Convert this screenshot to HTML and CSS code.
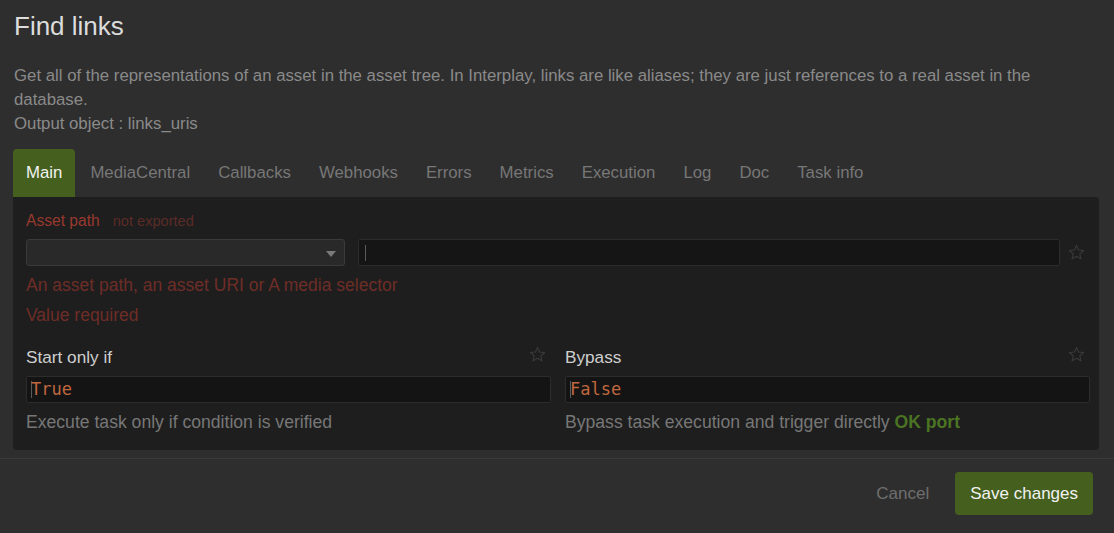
FILE: index.html
```html
<!DOCTYPE html>
<html>
<head>
<meta charset="utf-8">
<link rel="stylesheet" href="styles.css">
</head>
<body>
<div class="modal">
  <div class="body">
    <h1 class="title">Find links</h1>
    <p class="desc">Get all of the representations of an asset in the asset tree. In Interplay, links are like aliases; they are just references to a real asset in the database.<br>Output object : links_uris</p>
    <div class="tabs">
      <span class="tab active">Main</span>
      <span class="tab">MediaCentral</span>
      <span class="tab">Callbacks</span>
      <span class="tab">Webhooks</span>
      <span class="tab">Errors</span>
      <span class="tab">Metrics</span>
      <span class="tab">Execution</span>
      <span class="tab">Log</span>
      <span class="tab">Doc</span>
      <span class="tab">Task info</span>
    </div>
    <div class="panel">
      <div class="label-row">
        <span class="label-err">Asset path</span>
        <span class="not-exported">not exported</span>
      </div>
      <div class="asset-row">
        <div class="select"><span class="caret"></span></div>
        <div class="text-input"><span class="cursor"></span></div>
        <div class="star-slot">
          <svg class="star" viewBox="0 0 16 16" width="17" height="17"><path d="M8 1.3l1.9 4.4 4.8.4-3.6 3.2 1.1 4.7L8 11.5 3.8 14l1.1-4.7L1.3 6.1l4.8-.4z" fill="none" stroke="#3b3b3b" stroke-width="1" stroke-linejoin="round"/></svg>
        </div>
      </div>
      <div class="err-msg first">An asset path, an asset URI or A media selector</div>
      <div class="err-msg second">Value required</div>
      <div class="cols">
        <div class="col">
          <div class="field-head">
            <span class="field-label">Start only if</span>
            <svg class="star" viewBox="0 0 16 16" width="17" height="17"><path d="M8 1.3l1.9 4.4 4.8.4-3.6 3.2 1.1 4.7L8 11.5 3.8 14l1.1-4.7L1.3 6.1l4.8-.4z" fill="none" stroke="#3b3b3b" stroke-width="1" stroke-linejoin="round"/></svg>
          </div>
          <div class="code-input"><span class="cursor"></span>True</div>
          <div class="help">Execute task only if condition is verified</div>
        </div>
        <div class="col">
          <div class="field-head">
            <span class="field-label">Bypass</span>
            <svg class="star" viewBox="0 0 16 16" width="17" height="17"><path d="M8 1.3l1.9 4.4 4.8.4-3.6 3.2 1.1 4.7L8 11.5 3.8 14l1.1-4.7L1.3 6.1l4.8-.4z" fill="none" stroke="#3b3b3b" stroke-width="1" stroke-linejoin="round"/></svg>
          </div>
          <div class="code-input"><span class="cursor"></span>False</div>
          <div class="help">Bypass task execution and trigger directly <b class="ok">OK port</b></div>
        </div>
      </div>
    </div>
  </div>
  <div class="footer">
    <span class="cancel">Cancel</span>
    <span class="save">Save changes</span>
  </div>
</div>
</body>
</html>
```

FILE: styles.css
```css
* { box-sizing: border-box; }
html, body {
  margin: 0;
  padding: 0;
  background: #2e2e2e;
  font-family: "Liberation Sans", Arial, sans-serif;
  width: 1114px;
  height: 533px;
  overflow: hidden;
}
.modal { width: 1114px; }
.body { padding: 0 15px 0 13px; }
.title {
  margin: 11px 0 0 1px;
  font-size: 26px;
  line-height: 30px;
  font-weight: normal;
  color: #dcdcdc;
}
.desc {
  margin: 23px 0 0 1px;
  max-width: 1060px;
  font-size: 16.8px;
  line-height: 24px;
  color: #8a8a8a;
}
.tabs {
  display: flex;
  margin-top: 13px;
  height: 48px;
}
.tab {
  padding: 0 13px;
  margin-right: 2px;
  font-size: 16.8px;
  line-height: 48px;
  color: #777;
  border-radius: 4px 4px 0 0;
}
.tab.active { background: #45601e; color: #f2f2f2; }
.panel {
  width: 1086px;
  background: #1e1e1e;
  border-radius: 0 4px 4px 4px;
  padding: 15px 9px 18px 13px;
}
.label-row { height: 18px; line-height: 18px; display: flex; align-items: baseline; gap: 13px; }
.label-err { color: #98392f; font-size: 15.6px; }
.not-exported { color: #5c2b27; font-size: 14.6px; }
.asset-row { display: flex; margin-top: 9px; height: 27px; }
.select {
  width: 319px;
  height: 27px;
  background: #292929;
  border: 1px solid #3a3a3a;
  border-radius: 3px;
  position: relative;
  margin-right: 13px;
}
.caret {
  position: absolute;
  right: 8px;
  top: 11px;
  width: 0; height: 0;
  border-left: 5px solid transparent;
  border-right: 5px solid transparent;
  border-top: 6px solid #7a7a7a;
}
.text-input {
  flex: 1;
  height: 27px;
  background: #151515;
  border: 1px solid #2c2c2c;
  border-radius: 2px;
  padding: 5px 6px;
}
.cursor {
  display: inline-block;
  width: 1px;
  height: 16px;
  background: #5a5a5a;
  vertical-align: middle;
}
.text-input .cursor { display: block; }
.star-slot { width: 30px; display: flex; justify-content: center; align-items: center; padding-left: 2px; }
.star { display: block; }
.err-msg { color: #6e2d27; font-size: 17.5px; line-height: 20px; }
.err-msg.first { margin-top: 9px; }
.err-msg.second { margin-top: 10px; }
.cols { display: flex; gap: 14px; margin-top: 22px; }
.col { flex: 1; }
.field-head {
  display: flex;
  justify-content: space-between;
  align-items: center;
  height: 20px;
  padding-right: 5px;
}
.field-head .star { margin-top: -6px; }
.field-label { color: #cfcfcf; font-size: 17.2px; line-height: 20px; }
.code-input {
  margin-top: 9px;
  height: 27px;
  background: #141414;
  border: 1px solid #2c2c2c;
  border-radius: 2px;
  padding: 0 4px;
  font-family: "DejaVu Sans Mono", monospace;
  font-size: 17px;
  line-height: 25px;
  color: #c0673f;
}
.code-input .cursor { width: 1px; height: 17px; margin-right: -1px; vertical-align: -3px; }
.help { margin-top: 9px; color: #777; font-size: 17.6px; line-height: 20px; }
.ok { color: #4b7423; }
.footer {
  margin-top: 8px;
  border-top: 1px solid #3a3a3a;
  display: flex;
  justify-content: flex-end;
  align-items: center;
  padding: 13px 21px 0 0;
}
.cancel { color: #6e6e6e; font-size: 17px; margin-right: 26px; }
.save {
  background: #45601e;
  color: #f2f2f2;
  font-size: 17px;
  height: 43px;
  line-height: 43px;
  padding: 0 15px;
  border-radius: 4px;
}
```
